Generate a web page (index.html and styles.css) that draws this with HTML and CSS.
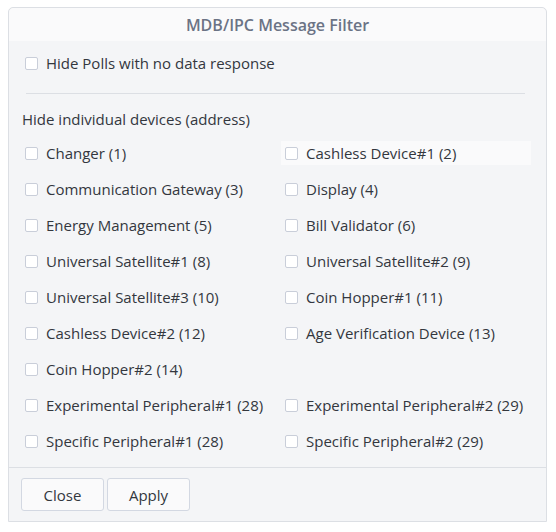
FILE: index.html
```html
<!DOCTYPE html>
<html lang="en">
<head>
    <meta charset="UTF-8">
    <title>MDB/IPC Message Filter</title>
    <link rel="stylesheet" href="styles.css">
</head>
<body>
    <div class="dialog">
        <div class="dialog-header">MDB/IPC Message Filter</div>

        <div class="dialog-body">
            <label class="check top-check">
                <span class="box"></span>
                Hide Polls with no data response
            </label>

            <hr class="sep">

            <p class="section-title">Hide individual devices (address)</p>

            <div class="device-grid">
                <label class="check"><span class="box"></span>Changer (1)</label>
                <label class="check hover"><span class="box"></span>Cashless Device#1 (2)</label>
                <label class="check"><span class="box"></span>Communication Gateway (3)</label>
                <label class="check"><span class="box"></span>Display (4)</label>
                <label class="check"><span class="box"></span>Energy Management (5)</label>
                <label class="check"><span class="box"></span>Bill Validator (6)</label>
                <label class="check"><span class="box"></span>Universal Satellite#1 (8)</label>
                <label class="check"><span class="box"></span>Universal Satellite#2 (9)</label>
                <label class="check"><span class="box"></span>Universal Satellite#3 (10)</label>
                <label class="check"><span class="box"></span>Coin Hopper#1 (11)</label>
                <label class="check"><span class="box"></span>Cashless Device#2 (12)</label>
                <label class="check"><span class="box"></span>Age Verification Device (13)</label>
                <label class="check"><span class="box"></span>Coin Hopper#2 (14)</label>
                <span></span>
                <label class="check"><span class="box"></span>Experimental Peripheral#1 (28)</label>
                <label class="check"><span class="box"></span>Experimental Peripheral#2 (29)</label>
                <label class="check"><span class="box"></span>Specific Peripheral#1 (28)</label>
                <label class="check"><span class="box"></span>Specific Peripheral#2 (29)</label>
            </div>
        </div>

        <div class="dialog-footer">
            <button class="btn">Close</button>
            <button class="btn">Apply</button>
        </div>
    </div>
</body>
</html>
```

FILE: styles.css
```css
body {
    margin: 0;
    background: #fff;
    font-family: 'Open Sans', sans-serif;
    color: #33373e;
}

.dialog {
    margin: 7px 9px 10px 8px;
    border: 1px solid #dcdfe4;
    border-radius: 5px 5px 0 0;
    background: #f4f5f7;
    display: flex;
    flex-direction: column;
    height: 515px;
    box-sizing: border-box;
}

.dialog-header {
    background: #fafafb;
    border-radius: 5px 5px 0 0;
    height: 33px;
    display: flex;
    align-items: center;
    justify-content: center;
    font-size: 16px;
    font-weight: 600;
    color: #6b7385;
}

.dialog-body {
    padding: 10px 16px 0 13px;
    flex: 1;
}

.check {
    display: flex;
    align-items: center;
    gap: 8px;
    font-size: 15px;
    height: 24px;
}

.box {
    width: 13px;
    height: 13px;
    box-sizing: border-box;
    border: 1px solid #c9ced9;
    border-radius: 2px;
    background: #fff;
    margin-left: 3px;
}

.sep {
    border: none;
    border-top: 1px solid #dcdfe4;
    margin: 18px 5px 13px 4px;
}

.section-title {
    margin: 0 0 10px;
    font-size: 15px;
    line-height: 24px;
}

.device-grid {
    display: grid;
    grid-template-columns: 260px 249px;
    row-gap: 12px;
}

.hover {
    background: #fafafb;
    margin-left: -1px;
    padding-left: 1px;
}

.dialog-footer {
    border-top: 1px solid #dcdfe4;
    padding: 10px 12px;
    display: flex;
    gap: 3px;
}

.btn {
    width: 83px;
    height: 33px;
    background: #fafafb;
    border: 1px solid #d3d8e2;
    border-radius: 3px;
    font-family: inherit;
    font-size: 15px;
    color: #33373e;
}
```
